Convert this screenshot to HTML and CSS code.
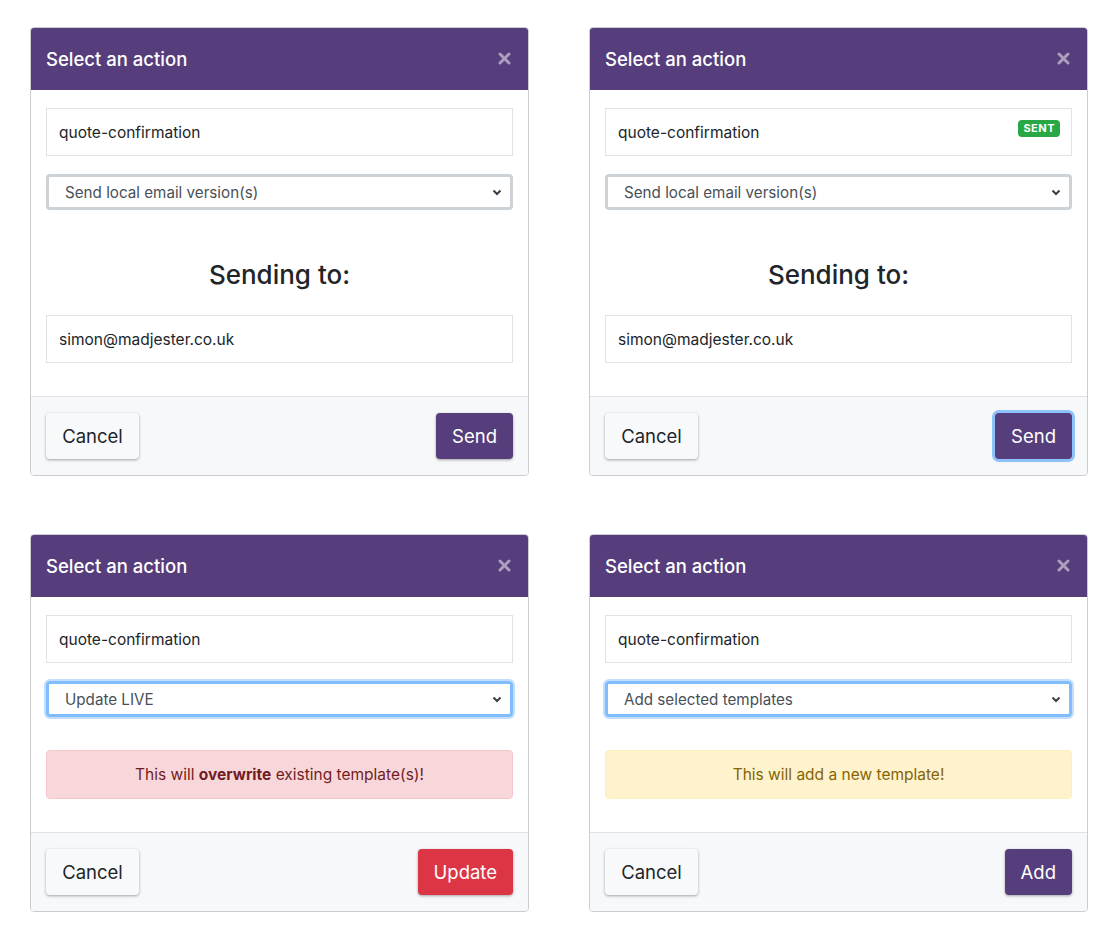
FILE: index.html
```html
<!DOCTYPE html>
<html>
<head>
<meta charset="utf-8">
<link rel="stylesheet" href="styles.css">
</head>
<body>
<div class="grid">
  <div class="card">
    <div class="card-header">
      <span class="title">Select an action</span>
      <svg class="close" width="13" height="13" viewBox="0 0 13 13"><path d="M2 2L11 11M11 2L2 11" stroke="currentColor" stroke-width="3" stroke-linecap="round"/></svg>
    </div>
    <div class="card-body">
      <div class="field">quote-confirmation</div>
      <div class="select"><span>Send local email version(s)</span><svg class="chev" width="10" height="7" viewBox="0 0 10 7"><path d="M1.5 1.5L5 5L8.5 1.5" fill="none" stroke="currentColor" stroke-width="2"/></svg></div>
      <h2 class="sending">Sending to:</h2>
      <div class="field">simon@madjester.co.uk</div>
    </div>
    <div class="card-footer">
      <button class="btn btn-light">Cancel</button>
      <button class="btn btn-purple">Send</button>
    </div>
  </div>

  <div class="card">
    <div class="card-header">
      <span class="title">Select an action</span>
      <svg class="close" width="13" height="13" viewBox="0 0 13 13"><path d="M2 2L11 11M11 2L2 11" stroke="currentColor" stroke-width="3" stroke-linecap="round"/></svg>
    </div>
    <div class="card-body">
      <div class="field field-badge">quote-confirmation<span class="badge">SENT</span></div>
      <div class="select"><span>Send local email version(s)</span><svg class="chev" width="10" height="7" viewBox="0 0 10 7"><path d="M1.5 1.5L5 5L8.5 1.5" fill="none" stroke="currentColor" stroke-width="2"/></svg></div>
      <h2 class="sending">Sending to:</h2>
      <div class="field">simon@madjester.co.uk</div>
    </div>
    <div class="card-footer">
      <button class="btn btn-light">Cancel</button>
      <button class="btn btn-purple focus">Send</button>
    </div>
  </div>

  <div class="card">
    <div class="card-header">
      <span class="title">Select an action</span>
      <svg class="close" width="13" height="13" viewBox="0 0 13 13"><path d="M2 2L11 11M11 2L2 11" stroke="currentColor" stroke-width="3" stroke-linecap="round"/></svg>
    </div>
    <div class="card-body">
      <div class="field">quote-confirmation</div>
      <div class="select select-focus"><span>Update LIVE</span><svg class="chev" width="10" height="7" viewBox="0 0 10 7"><path d="M1.5 1.5L5 5L8.5 1.5" fill="none" stroke="currentColor" stroke-width="2"/></svg></div>
      <div class="alert alert-danger">This will <b>overwrite</b> existing template(s)!</div>
    </div>
    <div class="card-footer">
      <button class="btn btn-light">Cancel</button>
      <button class="btn btn-red">Update</button>
    </div>
  </div>

  <div class="card">
    <div class="card-header">
      <span class="title">Select an action</span>
      <svg class="close" width="13" height="13" viewBox="0 0 13 13"><path d="M2 2L11 11M11 2L2 11" stroke="currentColor" stroke-width="3" stroke-linecap="round"/></svg>
    </div>
    <div class="card-body">
      <div class="field">quote-confirmation</div>
      <div class="select select-focus"><span>Add selected templates</span><svg class="chev" width="10" height="7" viewBox="0 0 10 7"><path d="M1.5 1.5L5 5L8.5 1.5" fill="none" stroke="currentColor" stroke-width="2"/></svg></div>
      <div class="alert alert-warning">This will add a new template!</div>
    </div>
    <div class="card-footer">
      <button class="btn btn-light">Cancel</button>
      <button class="btn btn-purple">Add</button>
    </div>
  </div>
</div>
</body>
</html>
```
FILE: styles.css
```css
* { box-sizing: border-box; }
body {
  margin: 0;
  background: #fff;
  font-family: Inter, "Noto Sans", sans-serif;
  color: #212529;
}
.grid {
  display: grid;
  grid-template-columns: 499px 499px;
  column-gap: 60px;
  row-gap: 58px;
  align-items: start;
  padding: 27px 0 0 30px;
}
.card {
  border: 1px solid #c9cdd2;
  border-radius: 4px;
  background: #fff;
  overflow: hidden;
}
.card-header {
  background: #563d7c;
  height: 62px;
  display: flex;
  align-items: center;
  justify-content: space-between;
  padding: 0 16px 0 15px;
  color: #fff;
}
.title {
  font-size: 18.5px;
  font-weight: 500;
}
.close {
  color: rgba(255,255,255,0.5);
  margin-right: 1px;
  margin-top: -2px;
}
.card-body {
  padding: 18px 15px 33px 15px;
  display: flex;
  flex-direction: column;
  border-bottom: 1px solid #dee2e6;
}
.field {
  flex: 0 0 48px;
  height: 48px;
  border: 1px solid #dfe2e6;
  padding: 0 12px;
  display: flex;
  align-items: center;
  font-size: 15.5px;
  color: #212529;
}
.field-badge {
  justify-content: space-between;
}
.badge {
  background: #28a745;
  color: #fff;
  font-size: 11px;
  font-weight: 700;
  letter-spacing: 0.5px;
  padding: 2px 5px;
  border-radius: 4px;
  margin-right: -1px;
  margin-top: -8px;
  line-height: 13px;
}
.select {
  flex: 0 0 36px;
  margin-top: 18px;
  height: 36px;
  border: 3px solid #cdd2d8;
  border-radius: 4px;
  padding: 0 8px 0 16px;
  display: flex;
  align-items: center;
  justify-content: space-between;
  font-size: 15.2px;
  color: #495057;
}
.select-focus {
  border: 3px solid #80bdff;
  box-shadow: 0 0 0 2px #c3defc;
}
.chev { color: #3a3f45; }
.sending {
  margin: 49px 0 24px 0;
  text-align: center;
  font-size: 26px;
  font-weight: 500;
  line-height: 32px;
  color: #212529;
}
.alert {
  margin-top: 33px;
  height: 49px;
  line-height: 47px;
  border-radius: 4px;
  text-align: center;
  font-size: 15.5px;
}
.alert-danger { background: #f8d7da; border: 1px solid #f5c6cb; color: #721c24; }
.alert-warning { background: #fff3cd; border: 1px solid #ffeeba; color: #856404; }
.card-footer {
  background: #f7f8fa;
  padding: 16px 15px 16px 15px;
  display: flex;
  justify-content: space-between;
}
.btn {
  height: 46px;
  font-family: Inter, "Noto Sans", sans-serif;
  font-size: 18.5px;
  padding: 0 16px;
  border-radius: 4px;
  border: none;
  box-shadow: 0 1px 3px rgba(0,0,0,0.35);
  cursor: pointer;
}
.btn-light { background: #f8f9fa; color: #212529; width: 93px; }
.btn-purple { background: #563d7c; color: #fff; }
.btn-red { background: #dc3545; color: #fff; }
.focus { box-shadow: 0 0 0 3px #8ec2fb, 0 1px 3px rgba(0,0,0,0.35); }
```
